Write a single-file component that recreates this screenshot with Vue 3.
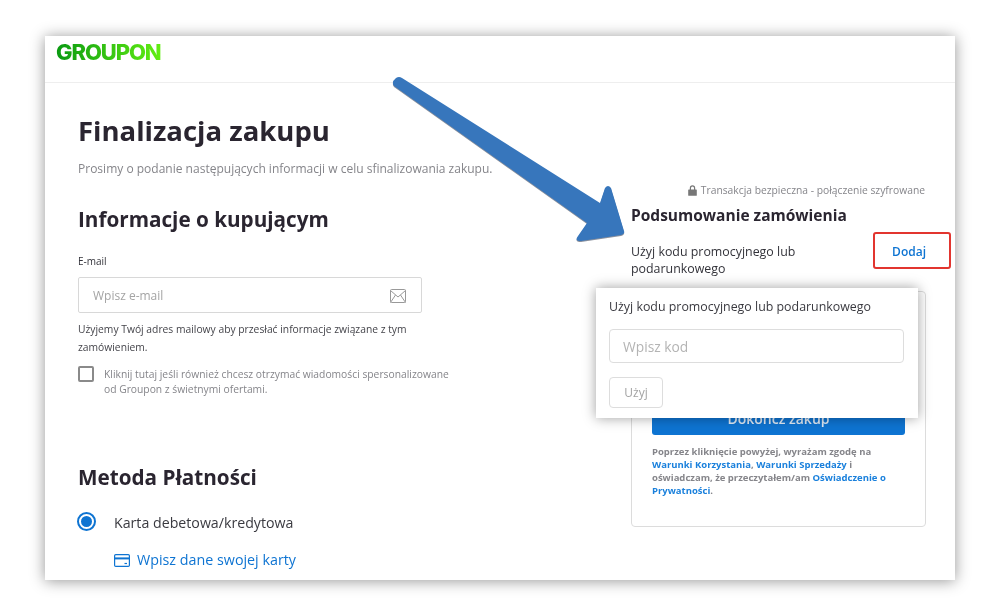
<script setup>
const termsLinks = {
  conditions: 'Warunki Korzystania',
  sale: 'Warunki Sprzedaży',
  privacy: 'Oświadczenie o Prywatności'
};
</script>

<template>
  <div class="page">
    <div class="window">
      <header class="top-bar">
        <span class="logo">GROUPON</span>
      </header>

      <main class="content">
        <section class="left">
          <h1 class="title">Finalizacja zakupu</h1>
          <p class="subtitle">Prosimy o podanie następujących informacji w celu sfinalizowania zakupu.</p>

          <h2 class="section-title buyer-title">Informacje o kupującym</h2>
          <label class="field-label">E-mail</label>
          <div class="email-input">
            <span>Wpisz e-mail</span>
            <svg width="16" height="14" viewBox="0 0 16 14" fill="none" stroke="#999" stroke-width="1">
              <rect x="0.5" y="0.5" width="15" height="13" rx="1" />
              <path d="M0.5 1.5 L8 8 L15.5 1.5 M0.5 13.5 L5.5 6 M15.5 13.5 L10.5 6" />
            </svg>
          </div>
          <p class="help">Użyjemy Twój adres mailowy aby przesłać informacje związane z tym zamówieniem.</p>
          <div class="consent">
            <span class="checkbox"></span>
            <p>Kliknij tutaj jeśli również chcesz otrzymać wiadomości spersonalizowane od Groupon z świetnymi ofertami.</p>
          </div>

          <h2 class="section-title payment-title">Metoda Płatności</h2>
          <div class="payment-row">
            <span class="radio"></span>
            <span>Karta debetowa/kredytowa</span>
          </div>
          <a class="card-link">
            <svg width="16" height="13" viewBox="0 0 16 13" fill="none" stroke="#0e74d2" stroke-width="1.2">
              <rect x="0.6" y="0.6" width="14.8" height="11.8" rx="1.2" />
              <path d="M0.6 4.4 H15.4" stroke-width="2" />
              <path d="M10.5 9.5 H13" />
            </svg>
            Wpisz dane swojej karty
          </a>
        </section>

        <aside class="right">
          <div class="secure">
            <svg width="9" height="11" viewBox="0 0 9 11" fill="#777">
              <path d="M1.8 4.5 V3 a2.7 2.7 0 0 1 5.4 0 V4.5 H8.2 a.6 .6 0 0 1 .6 .6 V10.2 a.6 .6 0 0 1 -.6 .6 H.8 a.6 .6 0 0 1 -.6 -.6 V5.1 a.6 .6 0 0 1 .6 -.6 Z M3 4.5 H6 V3 a1.5 1.5 0 0 0 -3 0 Z" />
            </svg>
            Transakcja bezpieczna - połączenie szyfrowane
          </div>
          <h3 class="summary-title">Podsumowanie zamówienia</h3>
          <div class="promo-row">
            <span class="promo-text">Użyj kodu promocyjnego lub podarunkowego</span>
            <a class="add-link">Dodaj</a>
            <span class="highlight"></span>
          </div>

          <div class="summary-card">
            <button class="finish-btn">Dokończ zakup</button>
            <p class="terms">
              Poprzez kliknięcie powyżej, wyrażam zgodę na
              <a>{{ termsLinks.conditions }}</a>, <a>{{ termsLinks.sale }}</a> i
              oświadczam, że przeczytałem/am <a>{{ termsLinks.privacy }}</a>.
            </p>
          </div>

          <div class="promo-popup">
            <div class="popup-title">Użyj kodu promocyjnego lub podarunkowego</div>
            <div class="code-input">Wpisz kod</div>
            <button class="use-btn">Użyj</button>
          </div>
        </aside>
      </main>

      <svg class="arrow" width="240" height="170" viewBox="0 0 240 170">
        <path
          d="M4 2 Q7 0 10 2 L208 127 L213 112 Q216 108 219 112 L232 155 Q233 158 229 159 L189 165 Q182 165 186 160 L195 147 L2 10 Q-1 6 4 2 Z"
          fill="#3776bc"
        />
      </svg>
    </div>
  </div>
</template>

<style>
html, body {
  margin: 0;
  background: #fff;
}
</style>

<style scoped>
.page {
  width: 1000px;
  height: 615px;
  box-sizing: border-box;
  padding: 36px 45px 35px;
  background: #fff;
  font-family: "Open Sans", "Noto Sans", sans-serif;
  overflow: hidden;
}

.window {
  position: relative;
  height: 544px;
  background: #fff;
  box-shadow: 0 1px 14px rgba(0, 0, 0, 0.42);
  overflow: hidden;
}

.top-bar {
  height: 46px;
  padding-left: 11px;
  border-bottom: 1px solid #eeeeee;
}

.logo {
  display: inline-block;
  margin-top: 2px;
  font-family: "Inter", sans-serif;
  font-size: 22px;
  line-height: 28px;
  font-weight: 800;
  letter-spacing: -1.1px;
  background: linear-gradient(90deg, #0a9a12, #62ee12);
  -webkit-background-clip: text;
  background-clip: text;
  color: transparent;
}

.content {
  display: grid;
  grid-template-columns: 553px 295px;
  padding-left: 33px;
  filter: blur(0.3px);
}

.title {
  margin: 28px 0 0;
  font-size: 27.5px;
  line-height: 40px;
  font-weight: 700;
  color: #2a2530;
}

.subtitle {
  margin: 9px 0 0;
  font-size: 12.03px;
  line-height: 18px;
  color: #85858a;
}

.section-title {
  margin: 0;
  font-size: 20.7px;
  line-height: 28px;
  font-weight: 700;
  color: #2a2530;
}

.buyer-title {
  margin-top: 27px;
}

.field-label {
  display: block;
  margin-top: 21px;
  font-size: 10px;
  line-height: 14px;
  color: #33333a;
}

.email-input {
  width: 344px;
  height: 36px;
  margin-top: 9px;
  box-sizing: border-box;
  padding: 1px 15px 0 14px;
  display: flex;
  align-items: center;
  justify-content: space-between;
  border: 1px solid #d8d8d8;
  border-radius: 2px;
  font-size: 12px;
  color: #a4a4a4;
}

.help {
  width: 344px;
  margin: 7px 0 0;
  font-size: 10.3px;
  line-height: 18px;
  color: #44444a;
}

.consent {
  display: flex;
  gap: 10px;
  margin-top: 9px;
}

.consent p {
  width: 350px;
  margin: 2px 0 0;
  font-size: 10.3px;
  line-height: 15px;
  color: #85858a;
}

.checkbox {
  flex: none;
  width: 12px;
  height: 12px;
  margin-top: 1px;
  border: 2px solid #8a8a8a;
  border-radius: 2px;
}

.payment-title {
  margin-top: 66px;
}

.payment-row {
  display: flex;
  align-items: center;
  gap: 19px;
  margin-top: 22px;
  font-size: 14.2px;
  line-height: 20px;
  color: #3a3a40;
}

.radio {
  flex: none;
  width: 11px;
  height: 11px;
  margin-top: -4px;
  border: 3px solid #fff;
  outline: 2px solid #0e74d2;
  outline-offset: -1px;
  border-radius: 50%;
  background: #0e74d2;
}

.card-link {
  display: flex;
  align-items: center;
  gap: 7px;
  margin: 17px 0 0 36px;
  font-size: 14.3px;
  line-height: 20px;
  color: #0e74d2;
}

.right {
  position: relative;
}

.secure {
  display: flex;
  align-items: center;
  justify-content: flex-end;
  gap: 4px;
  margin-top: 100px;
  padding-right: 1px;
  font-size: 10.3px;
  line-height: 14px;
  color: #85858a;
}

.summary-title {
  margin: 7px 0 0;
  font-size: 15.5px;
  line-height: 22px;
  font-weight: 700;
  color: #2a2530;
}

.promo-row {
  position: relative;
  display: flex;
  justify-content: space-between;
  margin-top: 17px;
}

.promo-text {
  width: 190px;
  font-size: 12.4px;
  line-height: 17px;
  font-weight: 500;
  color: #33333a;
}

.add-link {
  font-size: 12px;
  line-height: 17px;
  font-weight: 600;
  color: #0e74d2;
}

.highlight {
  position: absolute;
  left: 242px;
  top: -11px;
  width: 74px;
  height: 33px;
  border: 2px solid #e2352f;
  border-radius: 3px;
}

.summary-card {
  height: 236px;
  margin-top: 14px;
  box-sizing: border-box;
  padding: 109px 20px 0;
  border: 1px solid #dcdcdc;
  border-radius: 4px;
}

.finish-btn {
  display: block;
  width: 100%;
  height: 34px;
  padding: 0;
  border: none;
  border-radius: 3px;
  background: #0e74d2;
  color: #dfeaf6;
  font-family: inherit;
  font-size: 14px;
  font-weight: 600;
}

.terms {
  margin: 10px 0 0;
  font-size: 9.5px;
  line-height: 13px;
  font-weight: 700;
  color: #85858a;
}

.terms a {
  color: #1a80dc;
}

.promo-popup {
  position: absolute;
  left: -35px;
  top: 205px;
  width: 322px;
  height: 130px;
  box-sizing: border-box;
  padding: 11px 14px 0 13px;
  background: #fff;
  box-shadow: 0 0 12px rgba(0, 0, 0, 0.38);
}

.popup-title {
  font-size: 12.4px;
  line-height: 16px;
  font-weight: 500;
  color: #3a3a40;
}

.code-input {
  height: 34px;
  margin-top: 14px;
  box-sizing: border-box;
  padding-left: 13px;
  display: flex;
  align-items: center;
  border: 1px solid #dddddd;
  border-radius: 4px;
  font-size: 13.8px;
  color: #b4b4b4;
}

.use-btn {
  display: block;
  width: 54px;
  height: 31px;
  margin-top: 14px;
  padding: 0;
  border: 1px solid #dddddd;
  border-radius: 4px;
  background: #fff;
  font-family: inherit;
  font-size: 12px;
  color: #a4a4a4;
}

.arrow {
  position: absolute;
  left: 347px;
  top: 40px;
  overflow: visible;
  filter: drop-shadow(0 1px 0.5px rgba(60, 70, 90, 0.6));
}
</style>
